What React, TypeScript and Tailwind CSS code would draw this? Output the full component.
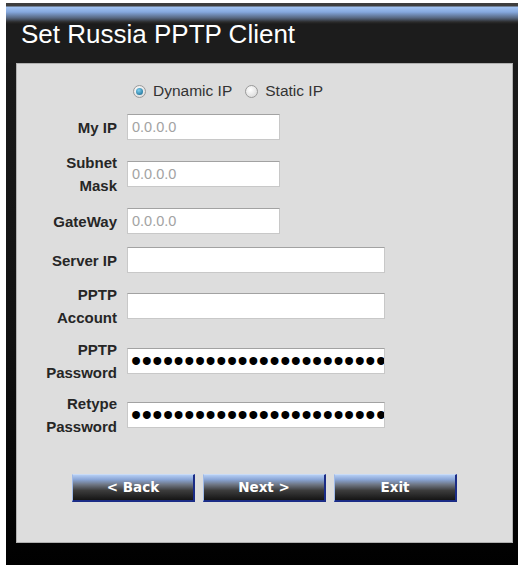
const arial = { fontFamily: '"Liberation Sans", Arial, sans-serif' }
const verdana = { fontFamily: '"DejaVu Sans", Verdana, sans-serif' }

const DOTS = '•'.repeat(27)

type Row = {
  label: string[]
  kind: 'ip' | 'text' | 'password'
  mt: string
}

const rows: Row[] = [
  { label: ['My IP'], kind: 'ip', mt: 'mt-[15px]' },
  { label: ['Subnet', 'Mask'], kind: 'ip', mt: 'mt-[21px]' },
  { label: ['GateWay'], kind: 'ip', mt: 'mt-[21px]' },
  { label: ['Server IP'], kind: 'text', mt: 'mt-[13px]' },
  { label: ['PPTP', 'Account'], kind: 'text', mt: 'mt-[20px]' },
  { label: ['PPTP', 'Password'], kind: 'password', mt: 'mt-[29px]' },
  { label: ['Retype', 'Password'], kind: 'password', mt: 'mt-[28px]' },
]

function Radio({ checked }: { checked?: boolean }) {
  return (
    <span className="flex items-center justify-center w-[13px] h-[13px] rounded-full border border-[#9a9a9a] bg-[radial-gradient(circle_at_40%_35%,#ffffff,#d4d4d4)]">
      {checked && (
        <span className="block w-[7px] h-[7px] rounded-full bg-[radial-gradient(circle_at_40%_35%,#7fd0f0,#0b5e86)]" />
      )}
    </span>
  )
}

function Field({ kind }: { kind: Row['kind'] }) {
  const width = kind === 'ip' ? 'w-[153px]' : 'w-[258px]'
  return (
    <div
      className={`${width} h-[26px] flex items-center overflow-hidden bg-white border border-[#c8c8c8] border-t-[#a2a2a2] pl-[4px]`}
    >
      {kind === 'ip' && (
        <span className="text-[14.5px] text-[#a3a3a3] leading-none" style={arial}>
          0.0.0.0
        </span>
      )}
      {kind === 'password' && (
        <span
          className="text-[29px] tracking-[0.5px] leading-none whitespace-nowrap text-black -ml-[1px]"
          style={arial}
        >
          {DOTS}
        </span>
      )}
    </div>
  )
}

function WizardButton({ children }: { children: string }) {
  return (
    <button
      className="w-[123px] h-[28px] flex items-center justify-center text-white font-bold text-[13.5px] border border-t-[#c9dbf6] border-l-[#9fb9e6] border-r-2 border-b-2 border-r-[#1b2c86] border-b-[#1b2c86] bg-[linear-gradient(to_bottom,#b4cdf3_0%,#8aa6d6_18%,#6f7785_38%,#3c3c3c_62%,#151515_100%)]"
      style={verdana}
    >
      {children}
    </button>
  )
}

export default function App() {
  return (
    <div className="w-[518px] h-[565px] bg-white pt-[3px] pl-[6px] overflow-hidden">
      <div className="h-full flex flex-col bg-[linear-gradient(to_bottom,#1c1c1c_0%,#111111_60%,#000000_100%)]">
        {/* header */}
        <div className="h-[60px] flex-shrink-0 pt-[18px] pl-[15px] bg-[linear-gradient(to_bottom,#3e3e3e_0px,#3e3e3e_3px,#a3c4f2_4px,#85a8de_9px,#56667f_15px,#2b2b2b_19px,#1c1c1c_21px,#1c1c1c_100%)]">
          <h1 className="text-white text-[26px] leading-none" style={arial}>
            Set Russia PPTP Client
          </h1>
        </div>

        {/* panel */}
        <div className="ml-[10px] mr-[5px] h-[480px] flex-shrink-0 bg-[#dddddd] border border-[#b0b0b0] flex flex-col">
          <div className="pt-[19px] pl-[116px] h-[35px] flex items-center gap-[7px] text-[15.5px] text-[#333333]" style={arial}>
            <Radio checked />
            <span className="mr-[6px]">Dynamic IP</span>
            <Radio />
            <span>Static IP</span>
          </div>

          {rows.map((row) => (
            <div key={row.label.join(' ')} className={`${row.mt} h-[26px] flex items-center`}>
              <div
                className="w-[100px] flex-shrink-0 text-right font-bold text-[15px] leading-[23px] text-[#262626]"
                style={arial}
              >
                {row.label.map((l) => (
                  <div key={l}>{l}</div>
                ))}
              </div>
              <div className="ml-[10px]">
                <Field kind={row.kind} />
              </div>
            </div>
          ))}

          <div className="mt-[46px] pl-[55px] flex gap-[8px]">
            <WizardButton>&lt; Back</WizardButton>
            <WizardButton>Next &gt;</WizardButton>
            <WizardButton>Exit</WizardButton>
          </div>
        </div>
      </div>
    </div>
  )
}
